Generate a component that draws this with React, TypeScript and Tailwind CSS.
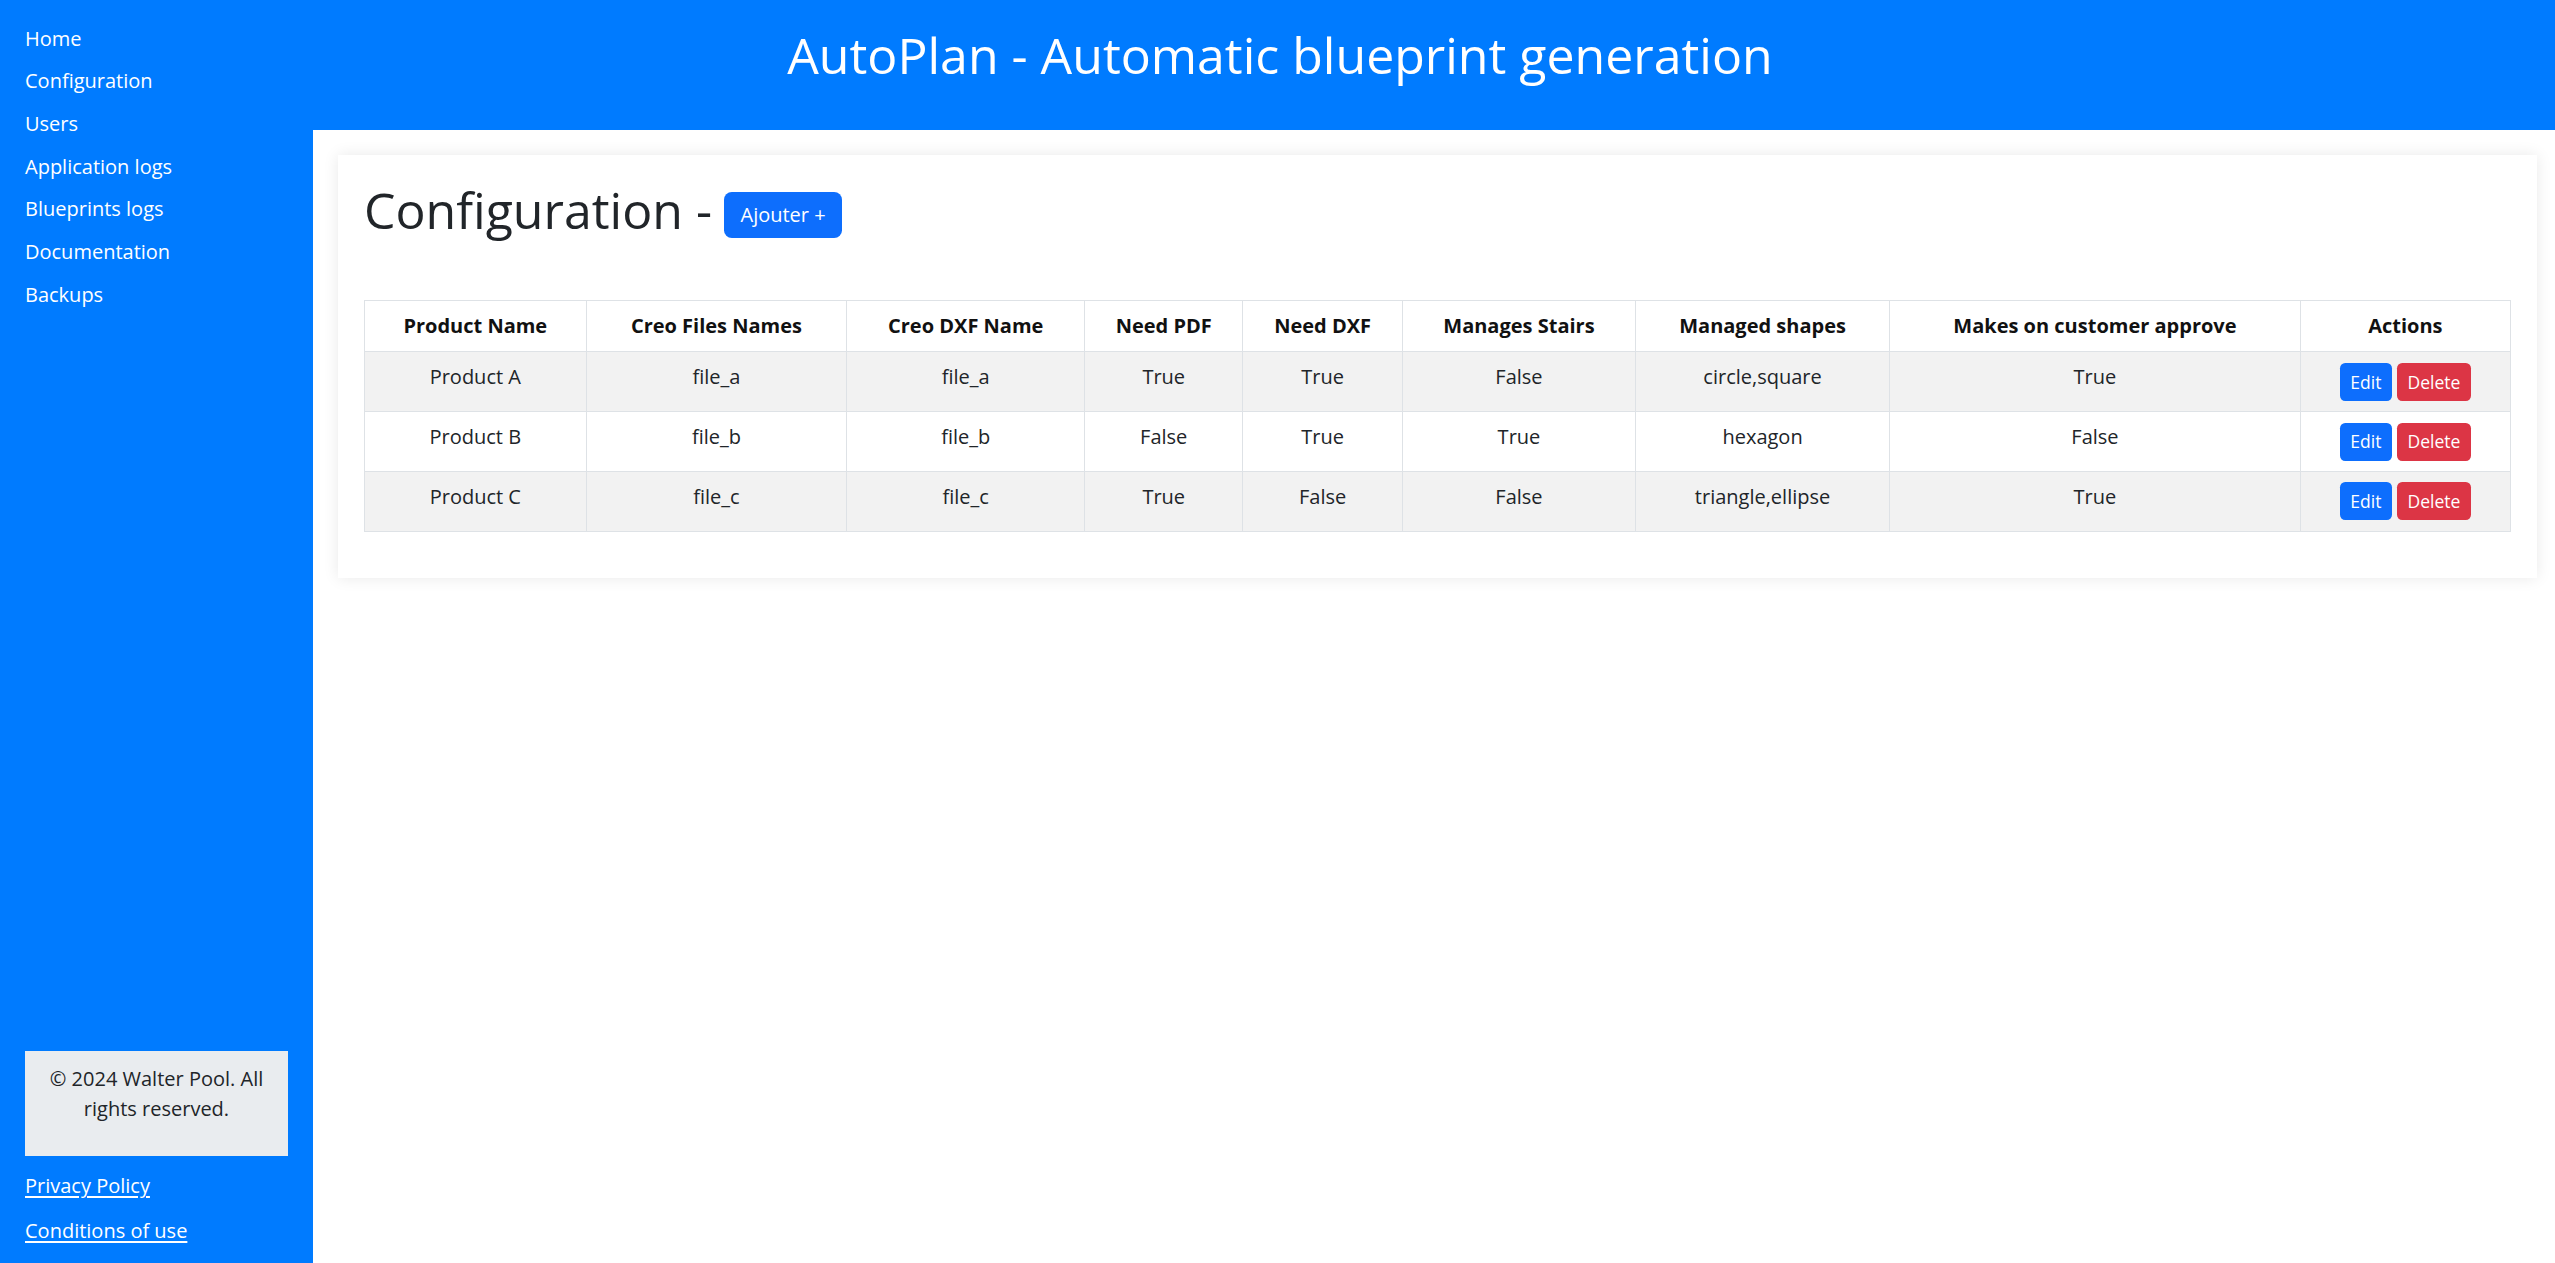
const navLinks = ['Home', 'Configuration', 'Users', 'Application logs', 'Blueprints logs', 'Documentation', 'Backups'];

const columns = [
  { label: 'Product Name', width: 'w-[221.6px]' },
  { label: 'Creo Files Names', width: 'w-[260.7px]' },
  { label: 'Creo DXF Name', width: 'w-[237.9px]' },
  { label: 'Need PDF', width: 'w-[158.1px]' },
  { label: 'Need DXF', width: 'w-[159.7px]' },
  { label: 'Manages Stairs', width: 'w-[233px]' },
  { label: 'Managed shapes', width: 'w-[254.2px]' },
  { label: 'Makes on customer approve', width: 'w-[410.6px]' },
  { label: 'Actions', width: 'w-[210.2px]' },
];

const products = [
  { name: 'Product A', files: 'file_a', dxf: 'file_a', pdf: 'True', needDxf: 'True', stairs: 'False', shapes: 'circle,square', approve: 'True' },
  { name: 'Product B', files: 'file_b', dxf: 'file_b', pdf: 'False', needDxf: 'True', stairs: 'True', shapes: 'hexagon', approve: 'False' },
  { name: 'Product C', files: 'file_c', dxf: 'file_c', pdf: 'True', needDxf: 'False', stairs: 'False', shapes: 'triangle,ellipse', approve: 'True' },
];

const cell = 'border border-[#dee2e6] px-[10.4px] py-[10px] leading-[30px] text-center align-top';

export default function App() {
  return (
    <div className="flex min-h-screen bg-white font-['Open_Sans',sans-serif] text-[20px] text-[#212529]">
      {/* Sidebar */}
      <aside className="w-[313px] shrink-0 bg-[#007bff] flex flex-col justify-between px-[25px] pt-[17.7px] pb-[17px]">
        <nav>
          {navLinks.map((link) => (
            <a key={link} href="#" className="block h-[42.65px] leading-[42.65px] text-[20px] text-white">
              {link}
            </a>
          ))}
        </nav>
        <div>
          <div className="w-[263px] bg-[#e9ecef] px-[12px] pt-[13px] pb-[13px] text-center">
            <p className="mb-[19px] text-[20px] leading-[30px] text-[#212529]">© 2024 Walter Pool. All rights reserved.</p>
          </div>
          <a href="#" className="block mt-[13.6px] text-[20px] leading-[31.2px] text-white underline underline-offset-[3px]">
            Privacy Policy
          </a>
          <a href="#" className="block mt-[13.8px] text-[20px] leading-[31.2px] text-white underline underline-offset-[3px]">
            Conditions of use
          </a>
        </div>
      </aside>

      {/* Main */}
      <main className="flex-1 flex flex-col">
        <header className="h-[130px] shrink-0 bg-[#007bff] pt-[24.6px] pr-[310px] text-center">
          <h1 className="text-[50px] leading-[60px] font-normal text-white">AutoPlan - Automatic blueprint generation</h1>
        </header>

        <section className="mt-[25px] ml-[25px] mr-[20px] bg-white px-[26px] pt-[25px] pb-[46px] shadow-[0_0_15px_rgba(0,0,0,0.09)]">
          <div className="flex items-start">
            <h2 className="text-[50px] leading-[60px] font-normal text-[#212529]">Configuration -</h2>
            <button className="ml-[12px] mt-[12px] h-[46px] px-[16.5px] rounded-[7.8px] bg-[#0d6efd] text-white text-[20px] leading-[30px]">
              Ajouter +
            </button>
          </div>

          <table className="mt-[60.4px] w-full table-fixed border-collapse border border-[#dee2e6]">
            <thead>
              <tr className="bg-white">
                {columns.map((col) => (
                  <th key={col.label} className={`${cell} ${col.width} font-bold text-[#111]`}>
                    {col.label}
                  </th>
                ))}
              </tr>
            </thead>
            <tbody>
              {products.map((p, i) => (
                <tr key={p.name} className={i % 2 === 0 ? 'bg-[#f2f2f2]' : 'bg-white'}>
                  <td className={cell}>{p.name}</td>
                  <td className={cell}>{p.files}</td>
                  <td className={cell}>{p.dxf}</td>
                  <td className={cell}>{p.pdf}</td>
                  <td className={cell}>{p.needDxf}</td>
                  <td className={cell}>{p.stairs}</td>
                  <td className={cell}>{p.shapes}</td>
                  <td className={cell}>{p.approve}</td>
                  <td className="border border-[#dee2e6] px-[10.4px] py-[10.4px] align-top">
                    <div className="flex justify-center gap-[5.3px]">
                      <button className="h-[38px] px-[10.4px] rounded-[5.2px] bg-[#0d6efd] text-white text-[17.5px]">Edit</button>
                      <button className="h-[38px] px-[10.4px] rounded-[5.2px] bg-[#dc3545] text-white text-[17.5px]">Delete</button>
                    </div>
                  </td>
                </tr>
              ))}
            </tbody>
          </table>
        </section>
      </main>
    </div>
  );
}
